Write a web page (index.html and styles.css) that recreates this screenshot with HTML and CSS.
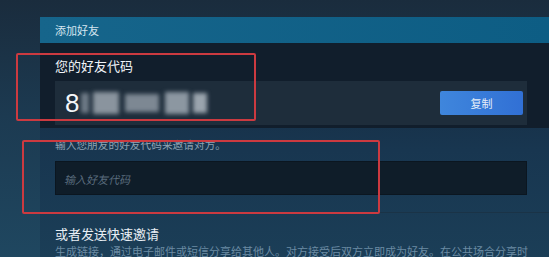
FILE: index.html
```html
<!DOCTYPE html>
<html lang="zh">
<head>
<meta charset="utf-8">
<title>添加好友</title>
<link rel="stylesheet" href="styles.css">
</head>
<body>
<div class="page">
  <div class="panel">
    <div class="header">添加好友</div>
    <div class="code-section">
      <div class="label">您的好友代码</div>
      <div class="code-box">
        <div class="code">
          <span class="digit">8</span>
          <span class="blur b1"></span>
          <span class="blur b2"></span>
          <span class="blur b3"></span>
          <span class="blur b4"></span>
          <span class="blur b5"></span>
        </div>
        <button class="copy">复制</button>
      </div>
    </div>
    <div class="invite-section">
      <div class="desc">输入您朋友的好友代码来邀请对方。</div>
      <div class="input">输入好友代码</div>
    </div>
    <div class="quick-section">
      <div class="quick-title">或者发送快速邀请</div>
      <div class="quick-desc">生成链接，通过电子邮件或短信分享给其他人。对方接受后双方立即成为好友。在公共场合分享时</div>
    </div>
  </div>
  <div class="annot annot-1"></div>
  <div class="annot annot-2"></div>
</div>
</body>
</html>
```

FILE: styles.css
```css
html, body {
  margin: 0;
  padding: 0;
  width: 549px;
  height: 257px;
  overflow: hidden;
  font-family: "Noto Sans CJK SC", "Noto Sans", sans-serif;
}

.page {
  position: relative;
  width: 549px;
  height: 257px;
  background: linear-gradient(180deg, #1a2c3d 0%, #1c3a51 45%, #1f4760 100%);
  padding-top: 17px;
  box-sizing: border-box;
  overflow: hidden;
}

.panel {
  margin-left: 40px;
  width: 509px;
  background: linear-gradient(180deg, #152537 0%, #183650 55%, #1b3e57 100%);
}

.header {
  height: 26px;
  line-height: 26px;
  padding-left: 15px;
  background: linear-gradient(90deg, #16658b 0%, #0d5d84 100%);
  color: #d6e6f0;
  font-size: 11px;
}

.code-section {
  background: #111e2c;
  padding: 13px 22px 3px 15px;
}

.label {
  color: #f0f4f8;
  font-size: 13px;
  line-height: 20px;
  height: 25px;
}

.code-box {
  height: 44px;
  background: #1e2d3b;
  display: flex;
  align-items: center;
  justify-content: space-between;
  padding: 0 4px 0 10px;
}

.code {
  display: flex;
  align-items: center;
}

.digit {
  color: #f4f6f8;
  font-family: "Liberation Sans", sans-serif;
  font-size: 26px;
  line-height: 30px;
  margin-right: 2px;
}

.blur {
  display: inline-block;
  filter: blur(2px);
}
.b1 { width: 8px; height: 20px; background: #6f7b87; margin-right: 4px; }
.b2 { width: 26px; height: 22px; background: #8a949e; margin-right: 6px; }
.b3 { width: 34px; height: 18px; background: #7d8893; margin-right: 6px; }
.b4 { width: 24px; height: 22px; background: #8c97a1; margin-right: 4px; }
.b5 { width: 14px; height: 20px; background: #9aa4ad; }

.copy {
  width: 83px;
  height: 24px;
  border: none;
  border-radius: 2px;
  background: linear-gradient(90deg, #3f86dc 0%, #3170d5 100%);
  color: #e6eef8;
  font-family: "Noto Sans CJK SC", sans-serif;
  font-size: 11px;
  padding: 0;
}

.invite-section {
  padding: 9px 22px 17px 15px;
  border-bottom: 1px solid #1a3347;
}

.desc {
  color: #8ea2b3;
  font-size: 10.7px;
  line-height: 16px;
  height: 24px;
}

.input {
  height: 34px;
  line-height: 34px;
  background: #0f1d29;
  border: 1px solid #0b1620;
  box-sizing: border-box;
  padding-left: 8px;
  color: #5a6c7d;
  font-size: 11px;
  font-style: italic;
}

.quick-section {
  padding: 11px 15px 0 15px;
}

.quick-title {
  color: #e8eef4;
  font-size: 13px;
  line-height: 20px;
}

.quick-desc {
  color: #6b8ba3;
  font-size: 11px;
  line-height: 14px;
  white-space: nowrap;
}

.annot {
  position: absolute;
  border: 2px solid #cc3a40;
  border-radius: 2px;
  box-sizing: border-box;
}

.annot-1 {
  left: 16px;
  top: 53px;
  width: 240px;
  height: 68px;
}

.annot-2 {
  left: 22px;
  top: 140px;
  width: 358px;
  height: 74px;
}
```
